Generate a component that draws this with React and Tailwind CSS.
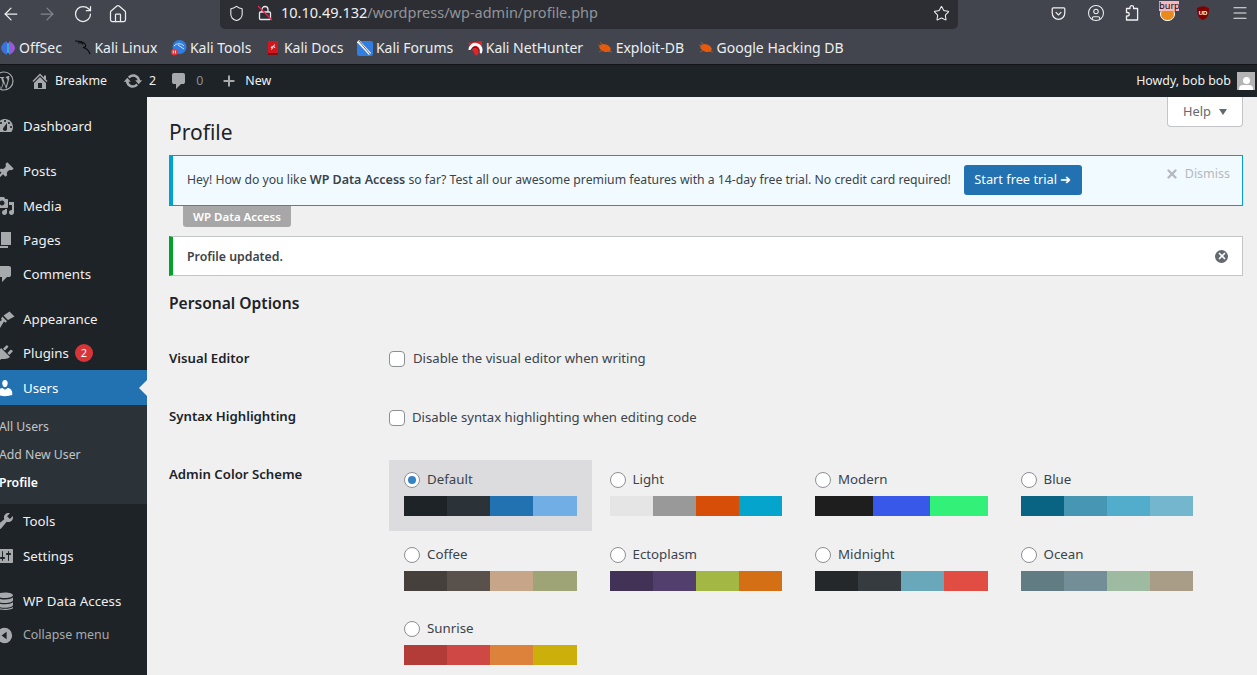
import React from "react";
import { ArrowLeft, ArrowRight, RotateCw, Home, Shield, Star, Menu, CircleUser, Plus, X } from "lucide-react";

const sans = "font-['Noto_Sans',sans-serif]";

const schemes = [
  { name: "Default", colors: ["#1d2327", "#2c3338", "#2271b1", "#72aee6"], active: true },
  { name: "Light", colors: ["#e5e5e5", "#999999", "#d64e07", "#04a4cc"] },
  { name: "Modern", colors: ["#1e1e1e", "#3858e9", "#33f078"] },
  { name: "Blue", colors: ["#096484", "#4796b3", "#52accc", "#74b6ce"] },
  { name: "Coffee", colors: ["#46403c", "#59524c", "#c7a589", "#9ea476"] },
  { name: "Ectoplasm", colors: ["#413256", "#523f6d", "#a3b745", "#d46f15"] },
  { name: "Midnight", colors: ["#25282b", "#363b3f", "#69a8bb", "#e14d43"] },
  { name: "Ocean", colors: ["#627c83", "#738e96", "#9ebaa0", "#aa9d88"] },
  { name: "Sunrise", colors: ["#b43c38", "#cf4944", "#dd823b", "#ccaf0b"] },
];

// dashicon style glyphs, drawn on a 20 box
const glyphs = {
  home: "M16 8.5l1.53 1.53-1.06 1.06L10 4.62l-6.47 6.47-1.06-1.06L10 2.5l4 4v-2h2v4zm-6-2.46l6 5.99V18H4v-5.97zM12 17v-5H8v5h4z",
  update: "M10.2 3.28c3.53 0 6.43 2.61 6.92 6h2.08l-3.5 4-3.5-4h2.32c-.45-1.97-2.21-3.45-4.32-3.45-1.45 0-2.73.71-3.54 1.78L4.95 5.66C6.23 4.2 8.11 3.28 10.2 3.28zm-.4 13.44c-3.52 0-6.43-2.61-6.92-6H.8l3.5-4c1.17 1.33 2.33 2.67 3.5 4H5.48c.45 1.97 2.21 3.45 4.32 3.45 1.45 0 2.73-.71 3.54-1.78l1.71 1.95c-1.28 1.46-3.15 2.38-5.25 2.38z",
  dashboard: "M3.76 16h12.48c1.1-1.37 1.76-3.11 1.76-5 0-4.42-3.58-8-8-8s-8 3.58-8 8c0 1.89.66 3.63 1.76 5zM10 4c.55 0 1 .45 1 1s-.45 1-1 1-1-.45-1-1 .45-1 1-1zM6 6c.55 0 1 .45 1 1s-.45 1-1 1-1-.45-1-1 .45-1 1-1zm8 0c.55 0 1 .45 1 1s-.45 1-1 1-1-.45-1-1 .45-1 1-1zm-5.37 5.55L12 7v6c0 1.1-.9 2-2 2s-2-.9-2-2c0-.57.24-1.08.63-1.45zM4 10c.55 0 1 .45 1 1s-.45 1-1 1-1-.45-1-1 .45-1 1-1zm12 0c.55 0 1 .45 1 1s-.45 1-1 1-1-.45-1-1 .45-1 1-1z",
  posts: "M10.44 3.02l1.82-1.82 6.36 6.35-1.83 1.82c-1.05-.68-2.48-.57-3.41.36l-.75.75c-.92.93-1.04 2.35-.35 3.41l-1.83 1.82-2.41-2.41-2.8 2.79c-.42.42-3.38 2.71-3.8 2.29s1.86-3.39 2.28-3.81l2.79-2.79L4.1 9.36l1.83-1.82c1.05.69 2.48.57 3.4-.36l.75-.75c.93-.92 1.05-2.35.36-3.41z",
  media: "M13 11V4c0-.55-.45-1-1-1h-1.67L9 1H5L3.67 3H2c-.55 0-1 .45-1 1v7c0 .55.45 1 1 1h10c.55 0 1-.45 1-1zM7 4.5c1.38 0 2.5 1.12 2.5 2.5S8.38 9.5 7 9.5 4.5 8.38 4.5 7 5.62 4.5 7 4.5zM14 6h5v10.5c0 1.38-1.12 2.5-2.5 2.5S14 17.88 14 16.5s1.12-2.5 2.5-2.5c.17 0 .34.02.5.05V9h-3V6zm-4 8.05V13h2v3.5c0 1.38-1.12 2.5-2.5 2.5S7 17.88 7 16.5 8.12 14 9.5 14c.17 0 .34.02.5.05z",
  pages: "M6 15V2h10v13H6zm-1 1h8v2H3V5h2v11z",
  comments: "M5 2h9q.82 0 1.41.59T16 4v7q0 .82-.59 1.41T14 13h-2l-5 5v-5H5q-.82 0-1.41-.59T3 11V4q0-.82.59-1.41T5 2z",
  appearance: "M14.5 2.5l5 5-6.5 3.5-4.5-4.5zM7.3 7.5l4.7 4.7-1.5 1.5L9 12.5 5 19 1 15l6-4-1-1z",
  plugins: "M13.11 4.36L9.87 7.6 8 5.73l3.24-3.24c.35-.34 1.05-.2 1.56.32.52.51.66 1.21.31 1.55zm-8 1.77l.91-1.12 9.01 9.01-1.19.84c-.71.71-2.63 1.16-3.82 1.16H6.14L4.9 17.26c-.59.59-1.54.59-2.12 0-.59-.58-.59-1.53 0-2.12l1.24-1.24v-3.88c0-1.13.4-3.19 1.09-3.89zm7.26 3.97l3.24-3.24c.34-.35 1.04-.21 1.55.31.52.51.66 1.21.31 1.55l-3.24 3.25z",
  users: "M10 9.25c-2.27 0-2.73-3.44-2.73-3.44C7 4.02 7.82 2 9.97 2c2.16 0 2.98 2.02 2.71 3.81 0 0-.41 3.44-2.68 3.44zm0 2.57L12.72 10c2.39 0 4.52 2.33 4.52 4.53v2.49s-3.65 1.13-7.24 1.13c-3.65 0-7.24-1.13-7.24-1.13v-2.49c0-2.25 1.94-4.53 4.64-4.53z",
  tools: "M16.68 9.77c-1.34 1.34-3.3 1.67-4.95.99l-5.41 6.52c-.99.99-2.59.99-3.57 0-.99-.98-.99-2.58 0-3.57l6.52-5.42c-.68-1.65-.35-3.61.99-4.95 1.28-1.28 3.12-1.62 4.72-1.06l-2.89 2.89 2.82 2.82 2.86-2.87c.53 1.58.18 3.4-1.09 4.67z",
  settings: "M18 16V4c0-.55-.45-1-1-1H3c-.55 0-1 .45-1 1v12c0 .55.45 1 1 1h14c.55 0 1-.45 1-1zM8 11h1c.55 0 1 .45 1 1s-.45 1-1 1H8v1.5c0 .28-.22.5-.5.5s-.5-.22-.5-.5V13H6c-.55 0-1-.45-1-1s.45-1 1-1h1V5.5c0-.28.22-.5.5-.5s.5.22.5.5V11zm5-2h-1c-.55 0-1-.45-1-1s.45-1 1-1h1V5.5c0-.28.22-.5.5-.5s.5.22.5.5V7h1c.55 0 1 .45 1 1s-.45 1-1 1h-1v5.5c0 .28-.22.5-.5.5s-.5-.22-.5-.5V9z",
  database: "M10 1.5c4.7 0 8 1.2 8 2.8S14.7 7 10 7 2 5.9 2 4.3 5.3 1.5 10 1.5zM2 6.5c1.4 1.3 4.4 2 8 2s6.6-.7 8-2v2.8c0 1.6-3.3 2.7-8 2.7s-8-1.1-8-2.7zM2 11.300c1.4 1.3 4.4 2 8 2s6.6-.7 8-2v2.8c0 1.6-3.3 2.7-8 2.7s-8-1.1-8-2.7zM2 16c1.4 1 4.4 1.8 8 1.8s6.6-.8 8-1.8v1c0 .9-3.3 2-8 2s-8-1.1-8-2z",
  collapse: "M10 1a9 9 0 1 1 0 18 9 9 0 0 1 0-18zM12.5 5.5L6.5 10l6 4.5z",
};

function Dash({ name, className }) {
  return (
    <svg viewBox="0 0 20 20" fill="currentColor" className={className}>
      <path fillRule="evenodd" d={glyphs[name]} />
    </svg>
  );
}

function WpLogo() {
  return (
    <svg viewBox="0 0 20 20" className="w-5 h-5 text-[#a7aaad] -ml-[6px]" fill="none" stroke="currentColor">
      <circle cx="10" cy="10" r="9" strokeWidth="1.2" />
      <path fill="currentColor" stroke="none" d="M2.5 6.8L6.8 18l2-5.8-1.7-5.2H5.9v-1h4.3v1H9.1l2.8 8.2 1.5-5c.5-1.7-.4-2.5-1-3.2h-.6c-.2-1.4 2-2.5 3.9-1.7-.6.4-.7.9-.6 1.5l.2 1-2.6 9.3-.6.9-2.2-6-2.3 6-.7-.9z" />
    </svg>
  );
}

function InsecureLock() {
  return (
    <svg viewBox="0 0 16 16" className="w-4 h-4" fill="none" stroke="#e8e8ea" strokeWidth="1.3">
      <rect x="2.5" y="7" width="11" height="7.5" rx="1" />
      <path d="M5 7V4.5a3 3 0 0 1 6 0V7" />
      <path d="M1 1l14 14" stroke="#e22850" strokeWidth="1.2" />
    </svg>
  );
}

function PocketIcon() {
  return (
    <svg viewBox="0 0 16 16" className="w-[15px] h-[15px]" fill="none" stroke="#f1f1f3" strokeWidth="1.3">
      <path d="M2.3 2h11.4c.5 0 1 .4 1 1v4.5a6.7 6.7 0 0 1-13.4 0V3c0-.6.5-1 1-1z" />
      <path d="M5 6.5l3 3 3-3" />
    </svg>
  );
}

function PuzzleIcon() {
  return (
    <svg viewBox="0 0 16 16" className="w-[16px] h-[16px]" fill="none" stroke="#f1f1f3" strokeWidth="1.3" strokeLinejoin="round">
      <path d="M6 3.5V2.5a1.8 1.8 0 0 1 3.6 0v1h4v11.5H2.5v-4h1a1.7 1.7 0 0 0 0-3.5h-1v-4z" />
    </svg>
  );
}

function Favicon({ type }) {
  if (type === "offsec")
    return (
      <svg viewBox="0 0 16 16" className="w-4 h-4">
        <path d="M7 1C3 3 1 5.5 1 8s2 5 6 7z" fill="#3f6fd8" />
        <path d="M9 1c4 2 6 4.5 6 7s-2 5-6 7z" fill="#9a57d8" />
        <path d="M8 3v10" stroke="#2bb3d6" strokeWidth="2" />
      </svg>
    );
  if (type === "kali")
    return (
      <svg viewBox="0 0 16 16" className="w-4 h-4" fill="none" stroke="#0b0b0d" strokeWidth="1.2">
        <path d="M0 1c4 0 8 .5 10 3 1.5 2 .5 3.5-2 3.5 3 .5 5.5 2 7 6.5" />
        <path d="M3 3c2-.5 4 0 5 1" />
      </svg>
    );
  if (type === "tools")
    return (
      <svg viewBox="0 0 16 16" className="w-4 h-4">
        <circle cx="8.5" cy="7" r="7" fill="#2f7ee0" />
        <path d="M3 6c3-3 7-3 10 0M7 5l6 4" stroke="#cfe4fb" strokeWidth="1" fill="none" />
        <circle cx="3.5" cy="12" r="3.3" fill="#e8383d" />
        <path d="M2.3 10.7v2.6M4.5 10.7v2.6" stroke="#fff" strokeWidth="1" />
      </svg>
    );
  if (type === "docs")
    return (
      <svg viewBox="0 0 16 16" className="w-4 h-4">
        <path d="M3 1h10v13H5c-1 0-2 .5-2 1z" fill="#d3161b" />
        <path d="M3 13h10v2H3z" fill="#7b1014" />
        <path d="M6 8l1.5-2M10 8L8.5 6M6.5 9.5l3-5" stroke="#fff" strokeWidth="1" />
      </svg>
    );
  if (type === "forums")
    return (
      <svg viewBox="0 0 16 16" className="w-4 h-4">
        <rect x="0" y="1" width="16" height="15" rx="2" fill="#2f7ee0" />
        <path d="M1 1l12 13" stroke="#f4f4f4" strokeWidth="3" />
        <path d="M2 1l11 13" stroke="#333" strokeWidth=".7" />
      </svg>
    );
  if (type === "hunter")
    return (
      <svg viewBox="0 0 16 16" className="w-4 h-4">
        <path d="M1 3l14-2v9l-6 6z" fill="#e0242a" />
        <path d="M13 13a5.5 5.5 0 1 0-10-3" fill="none" stroke="#fff" strokeWidth="3" />
        <path d="M12 13a4.2 4.2 0 1 0-8-3" fill="none" stroke="#222" strokeWidth="1" />
      </svg>
    );
  return (
    <svg viewBox="0 0 16 16" className="w-4 h-4">
      <ellipse cx="8" cy="8" rx="6" ry="3.6" transform="rotate(20 8 8)" fill="#e8590c" />
      <path d="M1 5l4 1M2 12l4-2M10 11l5 1M3 2l3 3" stroke="#b0622c" strokeWidth=".8" />
    </svg>
  );
}

const bookmarks = [
  ["offsec", "OffSec"],
  ["kali", "Kali Linux"],
  ["tools", "Kali Tools"],
  ["docs", "Kali Docs"],
  ["forums", "Kali Forums"],
  ["hunter", "Kali NetHunter"],
  ["exploit", "Exploit-DB"],
  ["exploit", "Google Hacking DB"],
];

function BrowserChrome() {
  const iconCls = "w-[20px] h-[20px]";
  return (
    <div className={`bg-[#42454e] text-[#eceef0] ${sans}`}>
      <div className="h-[29px] flex">
        <div className="w-[220px] flex items-center pb-[2px] pl-px">
          <ArrowLeft className={iconCls} strokeWidth={1.5} />
          <ArrowRight className={`${iconCls} ml-[16px] text-[#83858c]`} strokeWidth={1.5} />
          <RotateCw className={`${iconCls} ml-[16px]`} strokeWidth={1.5} />
          <Home className={`${iconCls} ml-[15px]`} strokeWidth={1.5} />
        </div>
        <div className="w-[738px] bg-[#2c2e33] rounded-b-[5px] flex items-center pb-[3px] pl-[8px] pr-[8px]">
          <Shield className="w-[17px] h-[17px]" strokeWidth={1.5} />
          <div className="ml-[12px]"><InsecureLock /></div>
          <span className="ml-[8px] text-[14.5px] whitespace-nowrap text-[#f0f0f2]">
            10.10.49.132<span className="text-[#92949a]">/wordpress/wp-admin/profile.php</span>
          </span>
          <Star className="w-[17px] h-[17px] ml-auto" strokeWidth={1.5} />
        </div>
        <div className="flex-1 flex items-center pb-[3px] pl-[93px]">
          <PocketIcon />
          <CircleUser className="w-[18px] h-[18px] ml-[21px]" strokeWidth={1.4} />
          <div className="ml-[19px]"><PuzzleIcon /></div>
          <div className="relative w-[18px] h-[18px] ml-[20px]">
            <div className="absolute left-0 top-[3px] w-[15px] h-[14px] rounded-full bg-[#e88a1c] border border-white" />
            <span className="absolute -left-px -top-[3px] w-[20px] h-[10px] bg-[#f7b6c2] text-[#111] text-[9px] leading-[10px] overflow-hidden font-['DejaVu_Sans',sans-serif]">burp</span>
          </div>
          <svg viewBox="0 0 16 16" className="w-[16px] h-[16px] ml-[17px]">
            <path d="M8 1l6 2c0 6-1 10-6 12C3 13 2 9 2 3z" fill="#800000" />
            <text x="8" y="10" textAnchor="middle" fontSize="6" fontWeight="700" fill="#fff" fontFamily="Liberation Sans">UD</text>
          </svg>
          <Menu className="w-[18px] h-[18px] ml-[20px]" strokeWidth={1.5} />
        </div>
      </div>
      <div className="h-[35px] flex items-center pt-[2px] text-[14px] text-[#eceef0] whitespace-nowrap">
        {bookmarks.map(([type, label], i) => (
          <div key={i} className="flex items-center gap-[3px] mr-[13.5px]">
            <Favicon type={type} />
            <span>{label}</span>
          </div>
        ))}
      </div>
      <div className="h-px bg-[#131417]" />
    </div>
  );
}

function AdminBar() {
  return (
    <div className={`h-[32px] bg-[#1d2327] text-[#f0f0f1] text-[12.4px] flex items-center ${sans}`}>
      <WpLogo />
      <Dash name="home" className="w-[20px] h-[20px] ml-[16px] text-[#a7aaad]" />
      <span className="ml-[5px]">Breakme</span>
      <Dash name="update" className="w-[20px] h-[20px] ml-[16px] text-[#a7aaad]" />
      <span className="ml-[6px]">2</span>
      <Dash name="comments" className="w-[20px] h-[20px] ml-[13px] text-[#a7aaad]" />
      <span className="ml-[7px] text-[#8c8f94]">0</span>
      <Plus className="w-[16px] h-[16px] ml-[18px] text-[#a7aaad]" strokeWidth={3} />
      <span className="ml-[8px]">New</span>
      <span className="ml-auto">Howdy, bob bob</span>
      <div className="w-[18px] h-[18px] ml-[6px] mr-[2px] bg-[#b4b4b4] flex flex-col items-center justify-end overflow-hidden">
        <div className="w-[7px] h-[7px] rounded-full bg-white mb-[1px]" />
        <div className="w-[14px] h-[5px] rounded-t-[4px] bg-white" />
      </div>
    </div>
  );
}

function MenuItem({ icon, label, badge, active, className = "" }) {
  return (
    <div className={`relative flex items-center text-[13.3px] ${active ? "h-[35px] bg-[#2271b1] text-white" : "h-[34px] text-[#f0f0f1]"} ${className}`}>
      <Dash name={icon} className={`w-[20px] h-[20px] -ml-[5px] shrink-0 ${active ? "text-white" : "text-[#a7aaad]"}`} />
      <span className="ml-[8px] pt-[2px]">{label}</span>
      {badge && (
        <span className="ml-[6px] w-[18px] h-[18px] rounded-full bg-[#d63638] text-white text-[11px] flex items-center justify-center">
          {badge}
        </span>
      )}
      {active && (
        <span className="absolute right-0 top-[10px] w-0 h-0 border-y-[8px] border-y-transparent border-r-[8px] border-r-[#f0f0f1]" />
      )}
    </div>
  );
}

function Sidebar() {
  return (
    <div className={`w-[147px] shrink-0 bg-[#1d2327] overflow-hidden ${sans}`}>
      <MenuItem icon="dashboard" label="Dashboard" className="mt-[12px]" />
      <MenuItem icon="posts" label="Posts" className="mt-[11px] mb-px" />
      <MenuItem icon="media" label="Media" />
      <MenuItem icon="pages" label="Pages" />
      <MenuItem icon="comments" label="Comments" />
      <MenuItem icon="appearance" label="Appearance" className="mt-[11px]" />
      <MenuItem icon="plugins" label="Plugins" badge="2" />
      <MenuItem icon="users" label="Users" active />
      <div className="h-[99px] bg-[#2c3338] text-[12.25px] text-[#c3c4c7] pt-[8px] flex flex-col -indent-px">
        <div className="h-[28px] flex items-center">All Users</div>
        <div className="h-[28px] flex items-center">Add New User</div>
        <div className="h-[28px] flex items-center font-semibold text-white">Profile</div>
      </div>
      <MenuItem icon="tools" label="Tools" className="mb-px" />
      <MenuItem icon="settings" label="Settings" />
      <MenuItem icon="database" label="WP Data Access" className="mt-[11px]" />
      <div className="h-[32px] flex items-center text-[12.4px] text-[#a7aaad] pt-[2px]">
        <Dash name="collapse" className="w-[17px] h-[17px] -ml-[4px]" />
        <span className="ml-[10px]">Collapse menu</span>
      </div>
    </div>
  );
}

function ColorOption({ name, colors, active }) {
  return (
    <div className={`w-[203px] h-[71px] pl-[15px] pt-[11px] ${active ? "bg-[#dcdcde]" : ""}`}>
      <div className="flex items-center h-[18px] text-[13.3px] text-[#3c434a]">
        <span className="w-[16px] h-[16px] rounded-full bg-white border border-[#8c8f94] flex items-center justify-center">
          {active && <span className="w-[8px] h-[8px] rounded-full bg-[#3582c4]" />}
        </span>
        <span className="ml-[7px]">{name}</span>
      </div>
      <div className="w-[172.5px] h-[20px] mt-[7px] flex">
        {colors.map((c) => (
          <div key={c} className="flex-1" style={{ background: c }} />
        ))}
      </div>
    </div>
  );
}

function Main() {
  return (
    <div className={`flex-1 bg-[#f0f0f1] pl-[22px] pr-[14px] relative ${sans}`}>
      <div className="absolute right-[14px] top-0 w-[76px] h-[30px] bg-white border border-t-0 border-[#c3c4c7] rounded-b-[4px] flex items-center justify-center gap-[8px] text-[12.8px] text-[#646970]">
        Help
        <span className="w-0 h-0 border-x-[4.5px] border-x-transparent border-t-[6px] border-t-[#646970]" />
      </div>
      <h1 className="text-[21px] leading-[28px] text-[#1d2327] pt-[21px]">Profile</h1>

      <div className="mt-[9px] h-[51px] bg-[#f1fbff] border border-[#00a0d2] border-l-4 flex items-center pl-[14px] relative text-[12.22px] text-[#3c434a]">
        <span>
          Hey! How do you like <b className="font-semibold text-[12.5px]">WP Data Access</b> so far? Test all our awesome premium features with a 14-day free trial. No credit card required!
        </span>
        <span className="ml-[13px] w-[118px] h-[30px] -mt-px bg-[#2271b1] rounded-[3px] text-white text-[12.75px] flex items-center justify-center whitespace-nowrap">
          Start free trial ➜
        </span>
        <span className="absolute right-[12px] top-[9px] flex items-center gap-[6px] text-[#b4b9be] text-[12.5px]">
          <X className="w-[14px] h-[14px]" strokeWidth={4} />
          Dismiss
        </span>
      </div>
      <div className="ml-[14px] w-[108px] h-[21px] bg-[#a7a7a7] rounded-b-[3px] text-white text-[11.5px] font-semibold flex items-center justify-center">
        WP Data Access
      </div>

      <div className="mt-[9px] h-[40px] bg-white border border-[#c3c4c7] border-l-4 border-l-[#00a32a] flex items-center pl-[14px] pr-[14px] text-[12.3px] font-semibold text-[#3c434a]">
        <span className="pt-[2px]">Profile updated.</span>
        <span className="ml-auto w-[13px] h-[13px] rounded-full bg-[#646970] flex items-center justify-center">
          <X className="w-[10px] h-[10px] text-white" strokeWidth={4} />
        </span>
      </div>

      <h2 className="mt-[16px] text-[15.6px] leading-[22px] font-semibold text-[#1d2327]">Personal Options</h2>

      <div className="mt-[34px] flex items-center h-[22px] text-[#3c434a]">
        <span className="w-[220px] font-semibold text-[#1d2327] text-[13.2px]">Visual Editor</span>
        <span className="w-[16px] h-[16px] bg-white border border-[#8c8f94] rounded-[4px]" />
        <span className="ml-[8px] text-[13.15px] pb-px">Disable the visual editor when writing</span>
      </div>
      <div className="mt-[37px] flex items-center h-[22px] text-[#3c434a]">
        <span className="w-[220px] font-semibold text-[#1d2327] text-[13.2px] pb-[2px]">Syntax Highlighting</span>
        <span className="w-[16px] h-[16px] bg-white border border-[#8c8f94] rounded-[4px]" />
        <span className="ml-[7px] text-[13.15px] pb-px">Disable syntax highlighting when editing code</span>
      </div>

      <div className="mt-[31px] flex">
        <span className="w-[220px] pt-[5px] font-semibold text-[#1d2327] text-[13.2px]">Admin Color Scheme</span>
        <div className="grid grid-cols-[205.5px_205.5px_205.5px_205.5px] auto-rows-[74.5px]">
          {schemes.map((s) => (
            <ColorOption key={s.name} {...s} />
          ))}
        </div>
      </div>
    </div>
  );
}

export default function App() {
  return (
    <div className="w-[1257px] h-[675px] overflow-hidden flex flex-col">
      <BrowserChrome />
      <AdminBar />
      <div className="flex flex-1 min-h-0">
        <Sidebar />
        <Main />
      </div>
    </div>
  );
}
